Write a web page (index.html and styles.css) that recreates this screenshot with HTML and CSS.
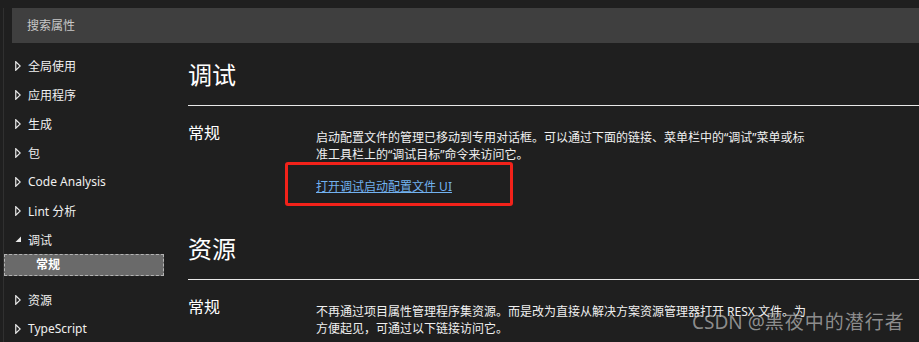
FILE: index.html
```html
<!DOCTYPE html>
<html lang="zh-CN">

<head>
    <meta charset="UTF-8">
    <meta name="viewport" content="width=device-width, initial-scale=1.0">
    <title>项目属性</title>
    <link rel="stylesheet" href="styles.css">
</head>

<body>
    <div class="page">
        <div class="search-bar">搜索属性</div>
        <div class="layout">
            <div class="sidebar">
                <div class="tree-item"><span class="arrow"><svg width="6" height="10" viewBox="0 0 6 10"><polygon points="0.75,0.75 5.25,5 0.75,9.25" fill="none" stroke="#e8e8e8" stroke-width="1.2"/></svg></span>全局使用</div>
                <div class="tree-item"><span class="arrow"><svg width="6" height="10" viewBox="0 0 6 10"><polygon points="0.75,0.75 5.25,5 0.75,9.25" fill="none" stroke="#e8e8e8" stroke-width="1.2"/></svg></span>应用程序</div>
                <div class="tree-item"><span class="arrow"><svg width="6" height="10" viewBox="0 0 6 10"><polygon points="0.75,0.75 5.25,5 0.75,9.25" fill="none" stroke="#e8e8e8" stroke-width="1.2"/></svg></span>生成</div>
                <div class="tree-item"><span class="arrow"><svg width="6" height="10" viewBox="0 0 6 10"><polygon points="0.75,0.75 5.25,5 0.75,9.25" fill="none" stroke="#e8e8e8" stroke-width="1.2"/></svg></span>包</div>
                <div class="tree-item"><span class="arrow"><svg width="6" height="10" viewBox="0 0 6 10"><polygon points="0.75,0.75 5.25,5 0.75,9.25" fill="none" stroke="#e8e8e8" stroke-width="1.2"/></svg></span>Code Analysis</div>
                <div class="tree-item"><span class="arrow"><svg width="6" height="10" viewBox="0 0 6 10"><polygon points="0.75,0.75 5.25,5 0.75,9.25" fill="none" stroke="#e8e8e8" stroke-width="1.2"/></svg></span>Lint 分析</div>
                <div class="tree-item"><span class="arrow"><svg width="7" height="7" viewBox="0 0 7 7"><polygon points="6,0.5 6,6 0.5,6" fill="#e8e8e8"/></svg></span>调试</div>
                <div class="tree-child">常规</div>
                <div class="tree-item after-child"><span class="arrow"><svg width="6" height="10" viewBox="0 0 6 10"><polygon points="0.75,0.75 5.25,5 0.75,9.25" fill="none" stroke="#e8e8e8" stroke-width="1.2"/></svg></span>资源</div>
                <div class="tree-item"><span class="arrow"><svg width="6" height="10" viewBox="0 0 6 10"><polygon points="0.75,0.75 5.25,5 0.75,9.25" fill="none" stroke="#e8e8e8" stroke-width="1.2"/></svg></span>TypeScript</div>
            </div>
            <div class="content">
                <h1 class="section-title">调试</h1>
                <div class="setting-row">
                    <div class="setting-label">常规</div>
                    <div class="setting-body">
                        <p class="setting-desc">启动配置文件的管理已移动到专用对话框。可以通过下面的链接、菜单栏中的“调试”菜单或标准工具栏上的“调试目标”命令来访问它。</p>
                        <a class="setting-link" href="#">打开调试启动配置文件 UI</a>
                    </div>
                </div>
                <h1 class="section-title second">资源</h1>
                <div class="setting-row">
                    <div class="setting-label">常规</div>
                    <div class="setting-body">
                        <p class="setting-desc">不再通过项目属性管理程序集资源。而是改为直接从解决方案资源管理器打开 RESX 文件。为方便起见，可通过以下链接访问它。</p>
                    </div>
                </div>
            </div>
        </div>
    </div>
    <div class="highlight-box"></div>
    <div class="watermark">CSDN @<span class="wm-cjk">黑夜中的潜行者</span></div>
</body>

</html>
```

FILE: styles.css
```css
body {
    margin: 0;
    background-color: #1f1f1f;
    color: #f0f0f0;
    font-family: "Noto Sans", "Noto Sans CJK SC", sans-serif;
    overflow: hidden;
    height: 342px;
    position: relative;
}

.page {
    margin-left: 3px;
    border-left: 1px solid #303030;
    height: 342px;
}

.search-bar {
    margin: 8px 0 0 8px;
    height: 35px;
    line-height: 35px;
    padding-left: 15px;
    background-color: #3f3f3f;
    color: #c8c8c8;
    font-size: 12px;
}

.layout {
    display: flex;
}

.sidebar {
    width: 161px;
    flex-shrink: 0;
    padding-top: 8px;
}

.tree-item {
    display: flex;
    align-items: center;
    height: 29px;
    padding-left: 11px;
    font-size: 12px;
    color: #f0f0f0;
}

.tree-item.after-child {
    margin-top: 9px;
}

.arrow {
    width: 13px;
    display: flex;
    align-items: center;
}

.tree-child {
    width: 160px;
    height: 22px;
    line-height: 20px;
    box-sizing: border-box;
    padding-left: 31px;
    background-color: #6a6a6a;
    border: 1px dashed #b4b4b4;
    font-size: 12px;
    font-weight: bold;
    color: #ffffff;
}

.content {
    flex: 1;
    padding-left: 23px;
}

.section-title {
    margin: 16px 0 0;
    padding-bottom: 14px;
    font-size: 24px;
    line-height: 32px;
    font-weight: normal;
    color: #ffffff;
    border-bottom: 1px solid #e8e8e8;
}

.section-title.second {
    margin-top: 37px;
}

.setting-row {
    display: flex;
    margin-top: 16px;
}

.setting-label {
    width: 128px;
    flex-shrink: 0;
    font-size: 16px;
    line-height: 22px;
    color: #ffffff;
}

.setting-body {
    padding-top: 7px;
}

.setting-desc {
    margin: 0;
    width: 496px;
    font-size: 12px;
    line-height: 17px;
    color: #f0f0f0;
}

.setting-link {
    display: inline-block;
    margin-top: 15px;
    font-size: 12px;
    line-height: 17px;
    color: #72b2f0;
    text-decoration: underline;
}

.highlight-box {
    position: absolute;
    left: 285px;
    top: 162px;
    width: 228px;
    height: 44px;
    box-sizing: border-box;
    border: 3px solid #f2221a;
    border-radius: 3px;
}

.watermark {
    position: absolute;
    left: 692px;
    top: 309px;
    font-size: 19px;
    line-height: 26px;
    color: rgba(190, 190, 190, 0.7);
    white-space: nowrap;
}

.wm-cjk {
    letter-spacing: 1px;
}
```
